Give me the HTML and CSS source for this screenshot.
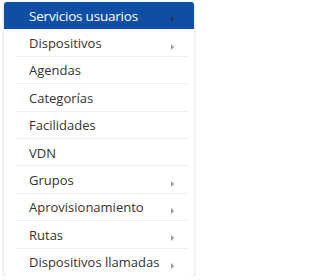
FILE: index.html
```html
<!DOCTYPE html>
<html>
<head>
<meta charset="utf-8">
<link rel="stylesheet" href="styles.css">
</head>
<body>
<ul class="menu">
  <li class="item active"><span class="label">Servicios usuarios</span><span class="caret"></span></li>
  <li class="item"><span class="label">Dispositivos</span><span class="caret"></span></li>
  <li class="item"><span class="label">Agendas</span></li>
  <li class="item"><span class="label">Categorías</span></li>
  <li class="item"><span class="label">Facilidades</span></li>
  <li class="item"><span class="label">VDN</span></li>
  <li class="item"><span class="label">Grupos</span><span class="caret"></span></li>
  <li class="item"><span class="label">Aprovisionamiento</span><span class="caret"></span></li>
  <li class="item"><span class="label">Rutas</span><span class="caret"></span></li>
  <li class="item last"><span class="label">Dispositivos llamadas</span><span class="caret"></span></li>
</ul>
</body>
</html>
```

FILE: styles.css
```css
html, body {
  margin: 0;
  padding: 0;
  background: #ffffff;
}
body {
  padding: 2px 6px 0 4px;
  font-family: "Open Sans", "Noto Sans", sans-serif;
}
.menu {
  list-style: none;
  margin: 0;
  padding: 0;
  width: 190px;
  background: #ffffff;
  border-radius: 3px;
  box-shadow: 0 1px 3px rgba(0,0,0,0.22);
  overflow: hidden;
}
.item {
  position: relative;
  display: flex;
  align-items: center;
  height: 27.4px;
  padding-left: 25px;
  padding-right: 20px;
  font-size: 13px;
  color: #333333;
  box-sizing: border-box;
}
.item::after {
  content: "";
  position: absolute;
  left: 12px;
  right: 6px;
  bottom: 0;
  height: 1px;
  background: #efefef;
}
.item.last::after,
.item.active::after {
  display: none;
}
.item.active {
  background: #0e4fa5;
  color: #ffffff;
  font-size: 13.5px;
  letter-spacing: -0.2px;
}
.label {
  flex: 1;
  white-space: nowrap;
}
.caret {
  width: 0;
  height: 0;
  border-top: 3px solid transparent;
  border-bottom: 3px solid transparent;
  border-left: 3px solid #999999;
  margin-top: 7px;
}
.item.active .caret {
  border-left-color: #2a3040;
}
```
